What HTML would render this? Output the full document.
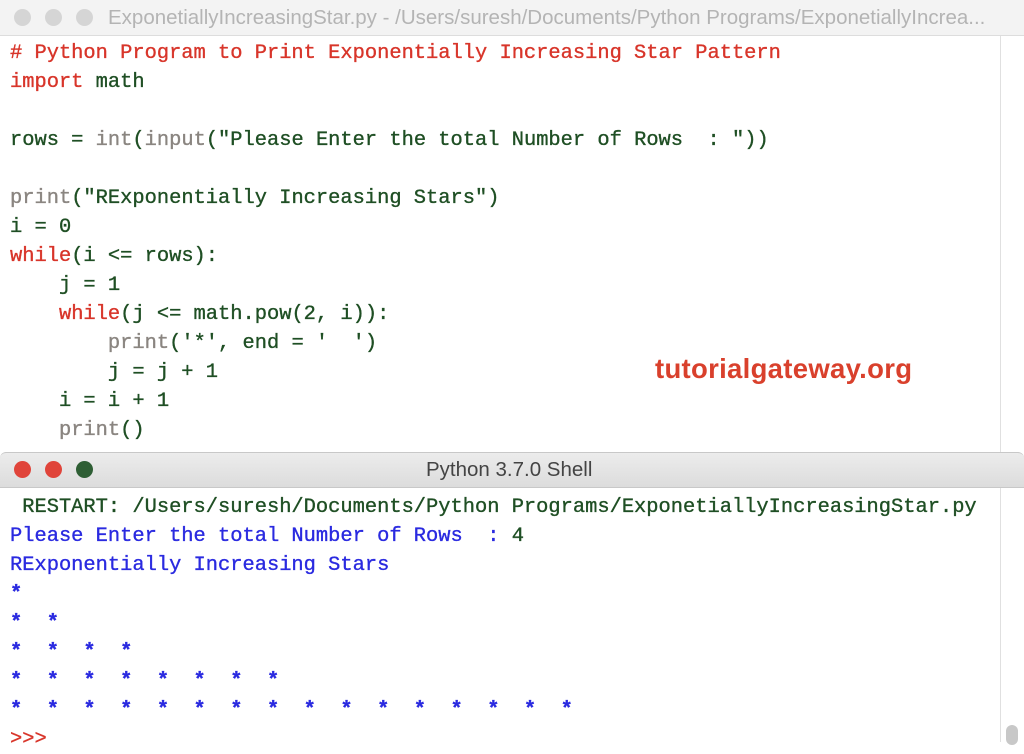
<!DOCTYPE html>
<html><head><style>
body{margin:0;width:1024px;height:742px;overflow:hidden;background:#fff;position:relative;font-family:"Liberation Mono",monospace;}
.bar{position:absolute;left:0;width:1024px;background:linear-gradient(#ececec,#dcdcdc);border-bottom:1px solid #c8c8c8;}
.dot{position:absolute;width:17px;height:17px;border-radius:50%;}
.code{position:absolute;left:10px;font-size:20.4px;line-height:29px;white-space:pre;color:#1f4f24;-webkit-text-stroke:0.35px currentColor;}
.k{color:#d8352a}.b{color:#8a8580}.u{color:#2a2ae0}
.st{font-weight:bold}
.title{position:absolute;font-family:"Liberation Sans",sans-serif;font-size:20.5px;white-space:nowrap}
</style></head><body>
<div class="bar" style="top:0;height:35px;background:#f3f3f3;border-bottom:1px solid #ddd">
<div class="dot" style="left:14px;top:9px;background:#d5d5d5"></div>
<div class="dot" style="left:45px;top:9px;background:#d5d5d5"></div>
<div class="dot" style="left:76px;top:9px;background:#d5d5d5"></div>
<div class="title" style="left:108px;top:6px;color:#b4b4b4">ExponetiallyIncreasingStar.py - /Users/suresh/Documents/Python Programs/ExponetiallyIncrea...</div>
</div>
<div style="position:absolute;left:1000px;top:36px;width:1px;height:416px;background:#e0e0e0"></div>
<div class="code" style="top:39px"><span class="k"># Python Program to Print Exponentially Increasing Star Pattern
import</span> math

rows = <span class="b">int</span>(<span class="b">input</span>("Please Enter the total Number of Rows  : "))

<span class="b">print</span>("RExponentially Increasing Stars")
i = 0
<span class="k">while</span>(i &lt;= rows):
    j = 1
    <span class="k">while</span>(j &lt;= math.pow(2, i)):
        <span class="b">print</span>('*', end = '  ')
        j = j + 1
    i = i + 1
    <span class="b">print</span>()</div>
<div style="position:absolute;left:655px;top:353px;font-family:'Liberation Sans',sans-serif;font-weight:bold;font-size:27.5px;color:#d9402c;letter-spacing:0.3px">tutorialgateway.org</div>
<div class="bar" style="top:452px;height:34px;border-top:1px solid #c8c8c8;border-radius:6px 6px 0 0">
<div class="dot" style="left:14px;top:8px;background:#e0443a"></div>
<div class="dot" style="left:45px;top:8px;background:#e0443a"></div>
<div class="dot" style="left:76px;top:8px;background:#2e5e34"></div>
<div class="title" style="left:426px;top:5px;color:#444;font-size:20.5px">Python 3.7.0 Shell</div>
</div>
<div style="position:absolute;left:1000px;top:488px;width:1px;height:254px;background:#e0e0e0"></div>
<div style="position:absolute;left:1006px;top:725px;width:12px;height:20px;border-radius:6px;background:#c8c8c8"></div>
<div class="code" style="top:493px"> RESTART: /Users/suresh/Documents/Python Programs/ExponetiallyIncreasingStar.py
<span class="u">Please Enter the total Number of Rows  : </span>4
<span class="u">RExponentially Increasing Stars<span class="st">
*  
*  *  
*  *  *  *  
*  *  *  *  *  *  *  *  
*  *  *  *  *  *  *  *  *  *  *  *  *  *  *  *  </span></span>
<span class="k">&gt;&gt;&gt;</span></div>
</body></html>
